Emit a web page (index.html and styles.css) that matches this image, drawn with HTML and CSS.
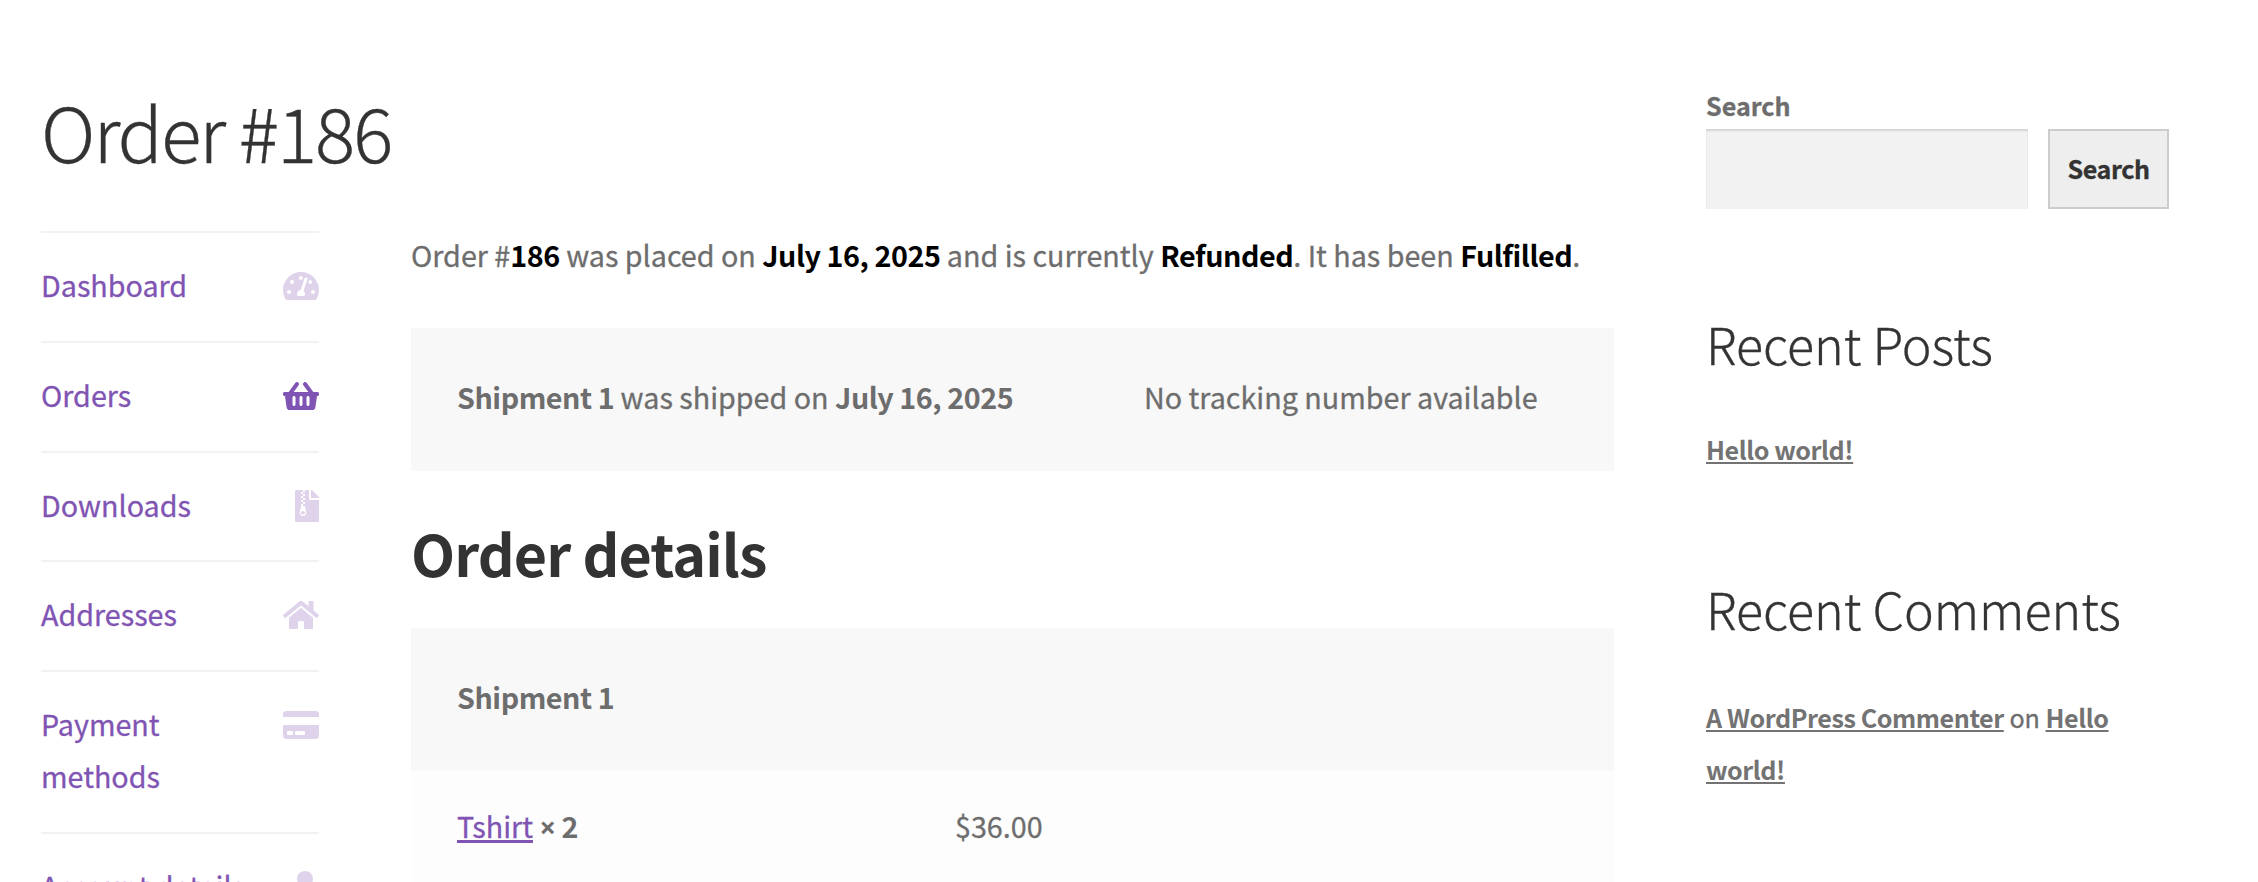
FILE: index.html
```html
<!DOCTYPE html>
<html lang="en">
<head>
<meta charset="utf-8">
<title>Order #186</title>
<link rel="stylesheet" href="styles.css">
</head>
<body>
<div class="page">
  <main class="primary">
    <h1 class="entry-title">Order #186</h1>
    <div class="account">
      <nav class="account-nav">
        <ul>
          <li><a href="#">Dashboard</a><svg class="icon" viewBox="0 0 576 512"><path d="M288 32C128.94 32 0 160.94 0 320c0 52.8 14.25 102.26 39.06 144.8 5.61 9.62 16.3 15.2 27.44 15.2h443c11.14 0 21.83-5.58 27.44-15.2C561.75 422.26 576 372.8 576 320c0-159.06-128.94-288-288-288zm0 64c14.71 0 26.58 10.13 30.32 23.65-1.11 2.26-2.64 4.23-3.45 6.67l-9.22 27.67c-5.13 3.49-10.97 6.01-17.64 6.01-17.67 0-32-14.33-32-32S270.33 96 288 96zM96 384c-17.67 0-32-14.33-32-32s14.33-32 32-32 32 14.33 32 32-14.33 32-32 32zm48-160c-17.67 0-32-14.33-32-32s14.33-32 32-32 32 14.33 32 32-14.33 32-32 32zm246.77-72.41l-61.33 184C343.13 347.33 352 364.54 352 384c0 11.72-3.38 22.55-8.88 32H232.88c-5.5-9.45-8.88-20.28-8.88-32 0-33.94 26.5-61.43 59.9-63.59l61.34-184.01c4.17-12.56 17.73-19.45 30.36-15.17 12.57 4.19 19.35 17.79 15.17 30.36zm14.66 57.2l15.52-46.55c3.47-1.29 7.13-2.23 11.05-2.23 17.67 0 32 14.33 32 32s-14.33 32-32 32c-11.38-.01-20.89-6.28-26.57-15.22zM480 384c-17.67 0-32-14.33-32-32s14.33-32 32-32 32 14.33 32 32-14.33 32-32 32z"/></svg></li>
          <li class="is-active"><a href="#">Orders</a><svg class="icon" viewBox="0 0 576 512"><path d="M576 216v16c0 13.255-10.745 24-24 24h-8l-26.113 182.788C514.509 462.435 494.257 480 470.37 480H105.63c-23.887 0-44.139-17.565-47.518-41.212L32 256h-8c-13.255 0-24-10.745-24-24v-16c0-13.255 10.745-24 24-24h67.341l106.78-146.821c10.395-14.292 30.407-17.453 44.701-7.058 14.293 10.395 17.453 30.408 7.058 44.701L170.477 192h235.046L326.12 82.821c-10.395-14.292-7.234-34.306 7.059-44.701 14.291-10.395 34.306-7.235 44.701 7.058L484.659 192H552c13.255 0 24 10.745 24 24zM312 392V280c0-13.255-10.745-24-24-24s-24 10.745-24 24v112c0 13.255 10.745 24 24 24s24-10.745 24-24zm112 0V280c0-13.255-10.745-24-24-24s-24 10.745-24 24v112c0 13.255 10.745 24 24 24s24-10.745 24-24zm-224 0V280c0-13.255-10.745-24-24-24s-24 10.745-24 24v112c0 13.255 10.745 24 24 24s24-10.745 24-24z"/></svg></li>
          <li><a href="#">Downloads</a><svg class="icon icon-file" viewBox="0 0 384 512"><path d="M377 105L279.1 7c-4.5-4.5-10.6-7-17-7H256v128h128v-6.1c0-6.3-2.5-12.4-7-16.9zM128.4 336c-17.9 0-32.4 12.1-32.4 27 0 15 14.6 27 32.5 27s32.5-12.1 32.5-27-14.6-27-32.6-27zM224 136V0h-63.6v32h-32V0H24C10.7 0 0 10.7 0 24v464c0 13.3 10.7 24 24 24h336c13.3 0 24-10.7 24-24V160H248c-13.2 0-24-10.8-24-24zM95.9 32h32v32h-32V32zm32.3 384c-33.2 0-58-30.4-51.4-62.9L96.4 256v-32h32v-32h-32v-32h32v-32h-32V96h32V64h32v32h-32v32h32v32h-32v32h32v32h-32v32h22.1c5.7 0 10.7 4.1 11.8 9.7l17.3 87.7c6.4 32.4-18.4 62.6-51.4 62.6z"/></svg></li>
          <li><a href="#">Addresses</a><svg class="icon" viewBox="0 0 576 512"><path d="M280.37 148.26L96 300.11V464a16 16 0 0 0 16 16l112.06-.29a16 16 0 0 0 15.92-16V368a16 16 0 0 1 16-16h64a16 16 0 0 1 16 16v95.64a16 16 0 0 0 16 16.05L464 480a16 16 0 0 0 16-16V300L295.67 148.26a12.19 12.19 0 0 0-15.3 0zM571.6 251.47L488 182.56V44.05a12 12 0 0 0-12-12h-56a12 12 0 0 0-12 12v72.61L318.47 43a48 48 0 0 0-61 0L4.34 251.47a12 12 0 0 0-1.6 16.9l25.5 31A12 12 0 0 0 45.15 301l235.22-193.74a12.19 12.19 0 0 1 15.3 0L530.9 301a12 12 0 0 0 16.9-1.6l25.5-31a12 12 0 0 0-1.7-16.93z"/></svg></li>
          <li><a href="#">Payment methods</a><svg class="icon" viewBox="0 0 576 512"><path d="M0 432c0 26.5 21.5 48 48 48h480c26.5 0 48-21.5 48-48V256H0v176zm192-68c0-6.6 5.4-12 12-12h136c6.6 0 12 5.4 12 12v40c0 6.6-5.4 12-12 12H204c-6.6 0-12-5.4-12-12v-40zm-128 0c0-6.6 5.4-12 12-12h72c6.6 0 12 5.4 12 12v40c0 6.6-5.4 12-12 12H76c-6.6 0-12-5.4-12-12v-40zM576 80v48H0V80c0-26.5 21.5-48 48-48h480c26.5 0 48 21.5 48 48z"/></svg></li>
          <li><a href="#">Account details</a><svg class="icon icon-user" viewBox="0 0 448 512"><path d="M224 256c70.7 0 128-57.3 128-128S294.7 0 224 0 96 57.3 96 128s57.3 128 128 128zm89.6 32h-16.7c-22.2 10.2-46.9 16-72.9 16s-50.6-5.8-72.9-16h-16.7C60.2 288 0 348.2 0 422.4V464c0 26.5 21.5 48 48 48h352c26.5 0 48-21.5 48-48v-41.6c0-74.2-60.2-134.4-134.4-134.4z"/></svg></li>
        </ul>
      </nav>
      <section class="order">
        <p class="order-status">Order #<mark>186</mark> was placed on <mark>July 16, 2025</mark> and is currently <mark>Refunded</mark>. It has been <mark>Fulfilled</mark>.</p>
        <div class="shipment">
          <span><b>Shipment 1</b> was shipped on <b>July 16, 2025</b></span>
          <span>No tracking number available</span>
        </div>
        <h2 class="details-title">Order details</h2>
        <div class="details">
          <div class="details-head">Shipment 1</div>
          <div class="details-row">
            <span><a href="#">Tshirt</a> <b><span class="times">×</span> 2</b></span>
            <span>$36.00</span>
          </div>
        </div>
      </section>
    </div>
  </main>
  <aside class="sidebar">
    <form class="search">
      <label for="s">Search</label>
      <div class="search-row">
        <input id="s" type="search">
        <button type="button">Search</button>
      </div>
    </form>
    <section class="widget posts">
      <h2>Recent Posts</h2>
      <p><a href="#">Hello world!</a></p>
    </section>
    <section class="widget comments">
      <h2>Recent Comments</h2>
      <p><a href="#">A WordPress Commenter</a> on <a href="#">Hello world!</a></p>
    </section>
  </aside>
</div>
</body>
</html>
```

FILE: styles.css
```css
* { box-sizing: border-box; }

body {
  margin: 0;
  background: #fff;
  color: #6d6d6d;
  font: 400 28.7px/51.78px "Source Sans Pro", "Noto Sans CJK SC", sans-serif;
}

h1, h2, p, ul { margin: 0; padding: 0; font-weight: inherit; }
b, mark, .details-head { font-weight: 700; letter-spacing: -.45px; -webkit-text-stroke: 0; }

.page {
  display: flex;
  gap: 92px;
  height: 882px;
  padding: 0 89px 0 41px;
  overflow: hidden;
  -webkit-text-stroke: .3px;
}
.primary { width: 1573px; flex: none; }

.entry-title {
  height: 231px;
  padding-top: 80px;
  color: #333;
  font-size: 75px;
  font-weight: 300;
  line-height: 102px;
  letter-spacing: -2px;
}

.account { display: flex; gap: 92px; }
.account-nav { width: 278px; flex: none; }
.account-nav ul { list-style: none; border-top: 2px solid #f2f2f2; }
.account-nav li {
  display: flex;
  justify-content: space-between;
  align-items: flex-start;
  padding: 26px 0 30px;
  border-bottom: 2px solid #f2f2f2;
}
.account-nav a { color: #7f54b3; text-decoration: none; max-width: 215px; }
.icon { width: 36px; height: 32px; margin-top: 11px; flex: none; fill: #7f54b3; opacity: .25; }
.icon-file { width: 24px; }
.icon-user { width: 28px; }
.is-active .icon { opacity: 1; }

.order { width: 1203px; flex: none; }
.order-status { height: 99px; margin-top: -2px; white-space: nowrap; }
.order-status mark { background: none; color: #000; }
.shipment {
  display: grid;
  grid-template-columns: 687px auto;
  height: 143px;
  padding: 43px 0 0 46px;
  background: #f8f8f8;
}
.details-title {
  height: 157px;
  padding-top: 42px;
  color: #333;
  font-size: 57.4px;
  font-weight: 700;
  line-height: 78px;
  letter-spacing: -.9px;
  -webkit-text-stroke: 0;
}
.details { background: #fdfdfd; }
.details-head { height: 143px; padding: 43px 46px; background: #f8f8f8; }
.details-row { display: grid; grid-template-columns: 498px auto; padding: 29px 46px 60px; }
.details-row a {
  color: #7f54b3;
  text-decoration: underline 3px;
  text-underline-offset: 2px;
}
.times { font-family: "Noto Sans", sans-serif; line-height: 1; }

.sidebar { width: 463px; flex: none; font-size: 25.1px; }
.search { padding-top: 80px; }
.search label { display: block; height: 49px; font-weight: 700; }
.search-row { display: flex; gap: 20px; height: 80px; }
.search input {
  width: 322px;
  border: 0;
  background: #f2f2f2;
  box-shadow: inset 0 2px 2px rgba(0, 0, 0, .125);
}
.search button {
  width: 121px;
  padding: 0 0 3px;
  border: 2px solid #ccc;
  background: #eee;
  color: #333;
  font: 700 25.1px/60px "Source Sans Pro", "Noto Sans CJK SC", sans-serif;
  letter-spacing: -.4px;
}
.widget h2 { color: #333; font-size: 50.2px; font-weight: 300; line-height: 70px; }
.widget a {
  color: #737373;
  font-weight: 700;
  letter-spacing: -.42px;
  text-decoration: underline 2px;
  text-underline-offset: 2px;
  -webkit-text-stroke: 0;
}
.posts { height: 265px; padding-top: 99px; }
.posts p { padding-top: 46px; }
.comments { padding-top: 99px; }
.comments p { padding-top: 49px; }
```
